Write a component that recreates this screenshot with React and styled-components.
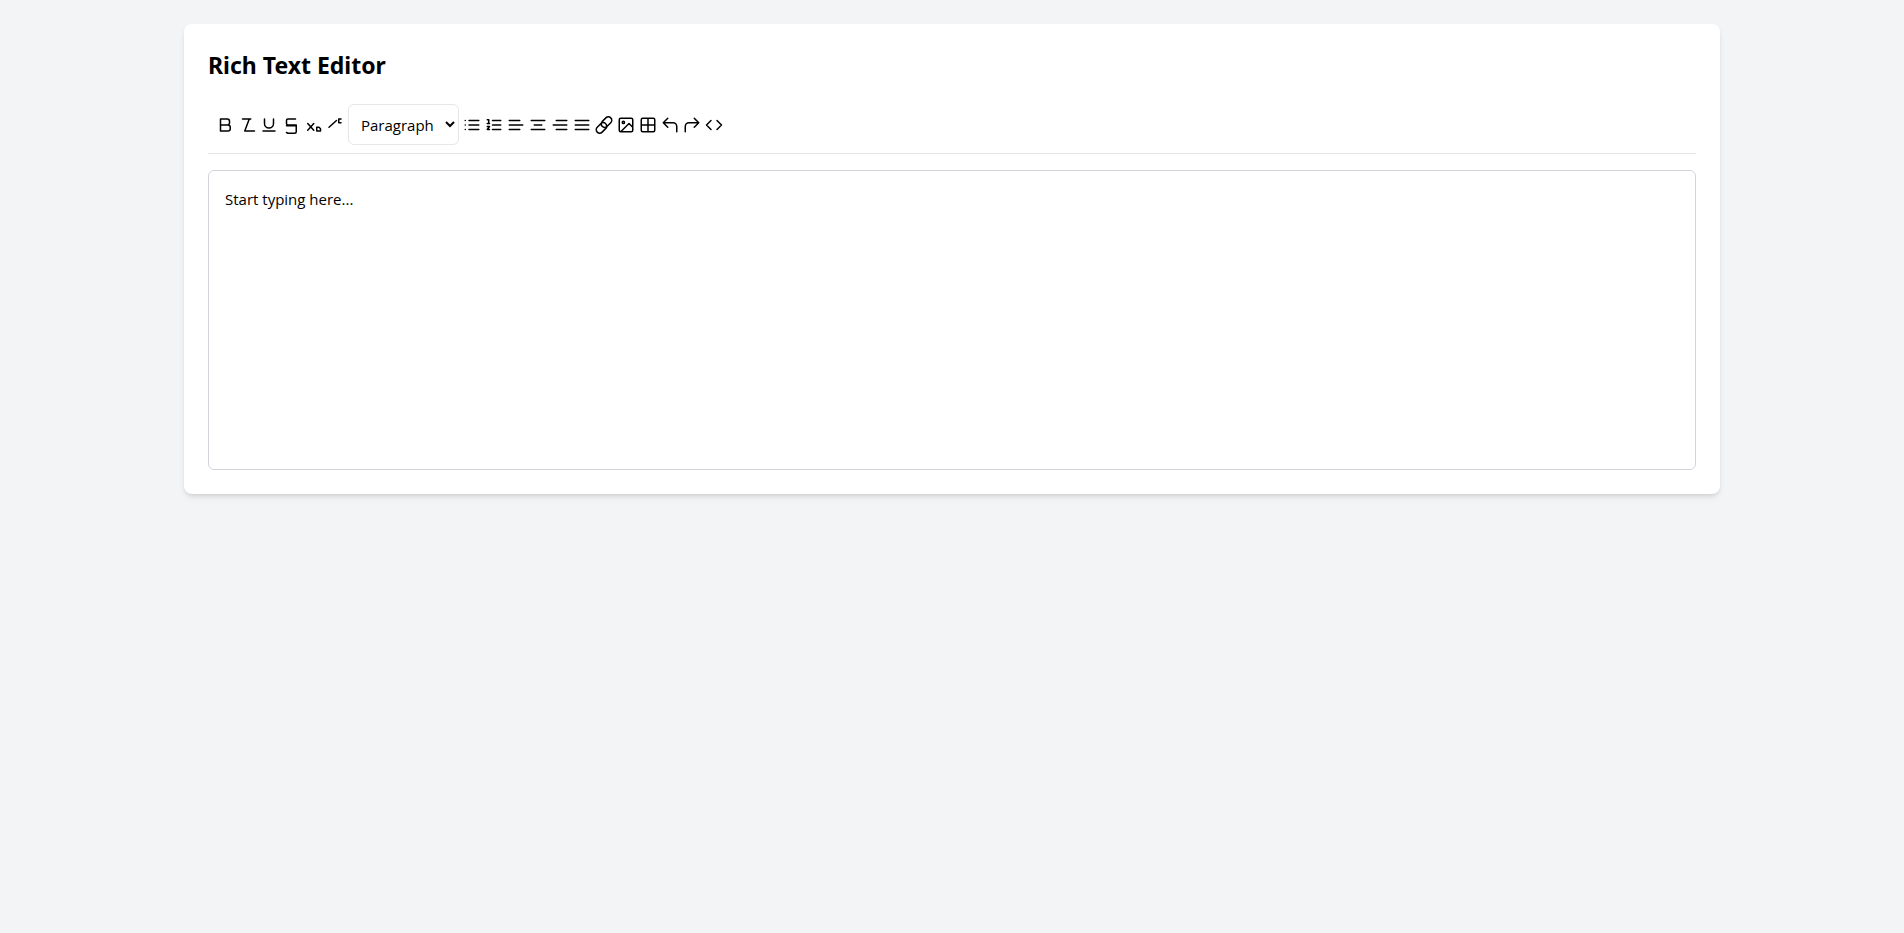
import { useState } from 'react'
import styled, { createGlobalStyle } from 'styled-components'

const GlobalStyle = createGlobalStyle`
    *,
    *::before,
    *::after {
        box-sizing: border-box;
    }

    body {
        margin: 0;
        background: #f3f4f6;
        color: #000000;
        font-family: "Segoe UI", "Open Sans", "Noto Sans", sans-serif;
        font-size: 15px;
        line-height: 24px;
    }
`

const Page = styled.main`
    min-height: 100vh;
    padding: 24px;
`

const Card = styled.section`
    max-width: 1536px;
    margin: 0 auto;
    padding: 24px;
    border-radius: 8px;
    background: #ffffff;
    box-shadow: 0 4px 6px -1px rgba(0, 0, 0, 0.1), 0 2px 4px -2px rgba(0, 0, 0, 0.1);
`

const Title = styled.h1`
    margin: 0 0 14px;
    font-family: "Segoe UI", "Noto Sans", sans-serif;
    font-size: 23px;
    font-weight: 700;
    line-height: 34px;
`

const Toolbar = styled.div`
    display: flex;
    flex-wrap: wrap;
    align-items: center;
    gap: 4px;
    margin-bottom: 16px;
    padding: 8px;
    border-bottom: 1px solid #e5e7eb;
`

const ToolButton = styled.button`
    display: flex;
    padding: 0;
    border: 0;
    background: transparent;
    color: inherit;
    cursor: pointer;

    svg {
        width: 18px;
        height: 18px;
        fill: none;
        stroke: currentColor;
        stroke-width: 2;
        stroke-linecap: round;
        stroke-linejoin: round;
    }
`

const FormatSelect = styled.select`
    width: 111px;
    height: 41px;
    padding: 8px;
    border: 1px solid #e5e7eb;
    border-radius: 6px;
    background: #ffffff;
    color: inherit;
    font: inherit;
`

const EditArea = styled.div`
    min-height: 300px;
    padding: 16px;
    border: 1px solid #d1d5db;
    border-radius: 6px;
    outline: none;
`

const text_tools = [
    { name: `Bold`, path: `M6 4h9a3 3 0 0 1 3 3v2a3 3 0 0 1-3 3H6zM6 12h10a3 3 0 0 1 3 3v2a3 3 0 0 1-3 3H6z` },
    { name: `Italic`, path: `M6 4h11M15 4L9 20M9 20h13` },
    { name: `Underline`, path: `M6 4v6a6 6 0 0 0 12 0V4M4 20h16` },
    { name: `Strikethrough`, path: `M18 4H8a2 2 0 0 0-2 2v4a2 2 0 0 0 2 2h11v9a2 2 0 0 1-2 2H8l-2-1M6 13h13` },
    { name: `Subscript`, path: `M5 10l8 9M13 10l-8 9M17 15h3l2 2v3h-5z` },
    { name: `Superscript`, path: `M4 15l10-9M20 4h-3v5h3M17 5v4` }
]

const block_tools = [
    { name: `Bulleted list`, path: `M8 6h13M8 12h13M8 18h13M3 6h.01M3 12h.01M3 18h.01` },
    { name: `Numbered list`, path: `M10 6h11M10 12h11M10 18h11M3 5h2v5M3 10h3M3 14h3l-3 4h3` },
    { name: `Align left`, path: `M3 6h14M3 12h18M3 18h14` },
    { name: `Align center`, path: `M3 6h18M7 12h10M3 18h18` },
    { name: `Align right`, path: `M7 6h14M3 12h18M7 18h14` },
    { name: `Justify`, path: `M3 6h18M3 12h18M3 18h18` },
    { name: `Insert link`, path: `M14 10a4.500 4.500 0 0 0-6 0l-5 5a4.500 4.500 0 0 0 6.500 6.500l5-5a4.500 4.500 0 0 0 0-6M10 14a4.500 4.500 0 0 0 6 0l5-5a4.500 4.500 0 0 0-6.500-6.500l-5 5a4.500 4.500 0 0 0 0 6` },
    { name: `Insert image`, path: `M5 3h14a2 2 0 0 1 2 2v14a2 2 0 0 1-2 2H5a2 2 0 0 1-2-2V5a2 2 0 0 1 2-2zM10 8.500a1.500 1.500 0 1 1-3 0a1.500 1.500 0 1 1 3 0M21 15l-5-5L5 21` },
    { name: `Insert table`, path: `M5 3h14a2 2 0 0 1 2 2v14a2 2 0 0 1-2 2H5a2 2 0 0 1-2-2V5a2 2 0 0 1 2-2zM3 12h18M12 3v18` },
    { name: `Undo`, path: `M9 15L3 9l6-6M3 9h13a5 5 0 0 1 5 5v7` },
    { name: `Redo`, path: `M15 15l6-6-6-6M21 9H8a5 5 0 0 0-5 5v7` },
    { name: `View source`, path: `M16 18l6-6-6-6M8 6l-6 6 6 6` }
]

/**
 * Renders a run of toolbar buttons.
 * @param {Object} props - Component props.
 * @returns {JSX.Element} Tool buttons.
 */
function ToolGroup( { tools } ) {

    return tools.map( ( { name, path } ) => <ToolButton key={ name } type="button" aria-label={ name } title={ name }>
        <svg viewBox="0 0 24 24" aria-hidden="true">
            <path d={ path } />
        </svg>
    </ToolButton> )
}

export default function App() {

    const [ format, set_format ] = useState( `p` )

    return <Page>
        <GlobalStyle />
        <Card>
            <Title>Rich Text Editor</Title>
            <Toolbar role="toolbar" aria-label="Formatting">
                <ToolGroup tools={ text_tools } />
                <FormatSelect aria-label="Text format" value={ format } onChange={ event => set_format( event.target.value ) }>
                    <option value="p">Paragraph</option>
                    <option value="h1">Heading 1</option>
                    <option value="h2">Heading 2</option>
                    <option value="h3">Heading 3</option>
                </FormatSelect>
                <ToolGroup tools={ block_tools } />
            </Toolbar>
            <EditArea contentEditable suppressContentEditableWarning role="textbox" aria-multiline="true" aria-label="Document">
                Start typing here...
            </EditArea>
        </Card>
    </Page>
}
